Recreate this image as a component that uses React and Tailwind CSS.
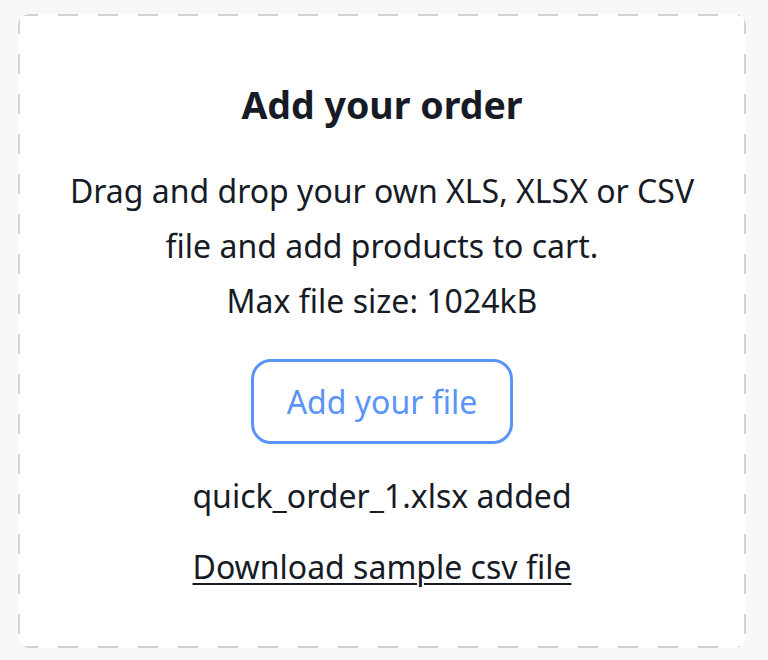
export default function App() {
  return (
    <div className="min-h-[660px] bg-[#f8f8f8] pt-[14px] pl-[18px] font-['Noto_Sans',sans-serif] text-[#161b26]">
      <div className="w-[728px] h-[634px] rounded-[12px] bg-white bg-[linear-gradient(90deg,#d1d1d6_50%,transparent_50%),linear-gradient(90deg,#d1d1d6_50%,transparent_50%),linear-gradient(180deg,#d1d1d6_50%,transparent_50%),linear-gradient(180deg,#d1d1d6_50%,transparent_50%)] [background-repeat:repeat-x,repeat-x,repeat-y,repeat-y] [background-size:40px_2px,40px_2px,2px_40px,2px_40px] [background-position:0_0,0_100%,0_0,100%_0] flex flex-col items-center pt-[69px]">
        <h2 className="text-[37.5px] leading-[44px] font-bold">Add your order</h2>
        <p className="mt-[36px] text-[32px] leading-[55px] text-center">
          Drag and drop your own XLS, XLSX or CSV
          <br />
          file and add products to cart.
          <br />
          Max file size: 1024kB
        </p>
        <button className="mt-[31px] h-[85px] px-[33px] border-[3px] border-[#5b94f7] rounded-[20px] text-[32px] text-[#5b94f7]">
          Add your file
        </button>
        <p className="mt-[24px] text-[32px] leading-[55px]">quick_order_1.xlsx added</p>
        <a href="#" className="mt-[16px] text-[32px] leading-[55px] underline underline-offset-[4px] decoration-2">
          Download sample csv file
        </a>
      </div>
    </div>
  )
}
